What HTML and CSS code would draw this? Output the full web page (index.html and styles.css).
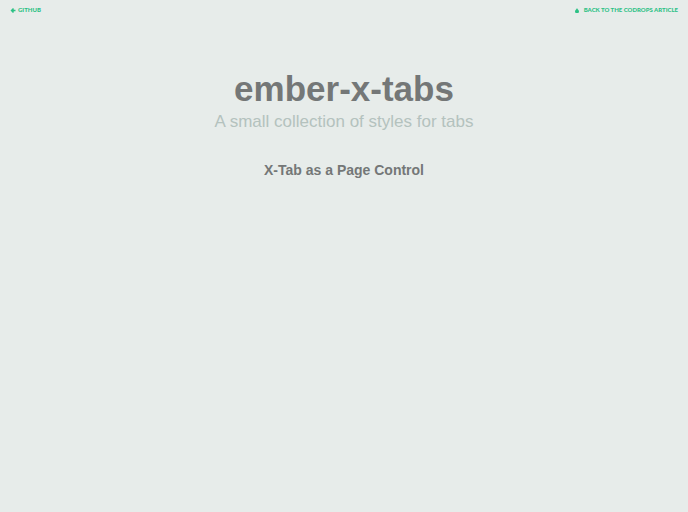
FILE: index.html
```html
<!DOCTYPE html>
<html lang="en">
<head>
    <meta charset="UTF-8">
    <meta name="viewport" content="width=device-width, initial-scale=1.0">
    <title>ember-x-tabs</title>
    <link rel="stylesheet" href="styles.css">
</head>
<body>
    <nav class="top-bar">
        <a class="top-link" href="#">
            <svg class="icon" viewBox="0 0 10 10" aria-hidden="true"><path d="M0 5 L5 0 L7 2 L6 3.500 H10 V6.500 H6 L7 8 L5 10 Z"/></svg>
            <span>GitHub</span>
        </a>
        <a class="top-link top-link-right" href="#">
            <svg class="icon" viewBox="0 0 10 10" aria-hidden="true"><path d="M5 0 C6 3 9 4 9 7 A3.500 3 0 0 1 1 7 C1 4 4 3 5 0 Z"/></svg>
            <span>Back to the Codrops Article</span>
        </a>
    </nav>

    <header class="page-header">
        <h1>ember-x-tabs</h1>
        <p class="tagline">A small collection of styles for tabs</p>
    </header>

    <main>
        <h2>X-Tab as a Page Control</h2>
    </main>
</body>
</html>
```
FILE: styles.css
```css
body {
    font-family: "Liberation Sans", Arial, sans-serif;
    background: #e7ecea;
    color: #747777;
    margin: 0;
}
.top-bar {
    display: flex;
    justify-content: space-between;
    padding: 6px 10px 8px;
}
.top-link {
    display: flex;
    align-items: center;
    gap: 2px;
    color: #2cc185;
    font-family: Lato, sans-serif;
    font-size: 6px;
    font-weight: 900;
    line-height: 8px;
    text-transform: uppercase;
    text-decoration: none;
}
.top-link-right {
    gap: 4px;
}
.icon {
    width: 6px;
    height: 5px;
    fill: currentColor;
}
.page-header {
    padding: 47px 20px 26px;
    text-align: center;
}
h1 {
    margin: 0;
    font-size: 35px;
    line-height: 40px;
}
.tagline {
    margin: 0;
    color: #b4c2be;
    font-size: 17px;
    line-height: 26px;
}
h2 {
    margin: 0;
    font-size: 14px;
    line-height: 18px;
    text-align: center;
}
```
